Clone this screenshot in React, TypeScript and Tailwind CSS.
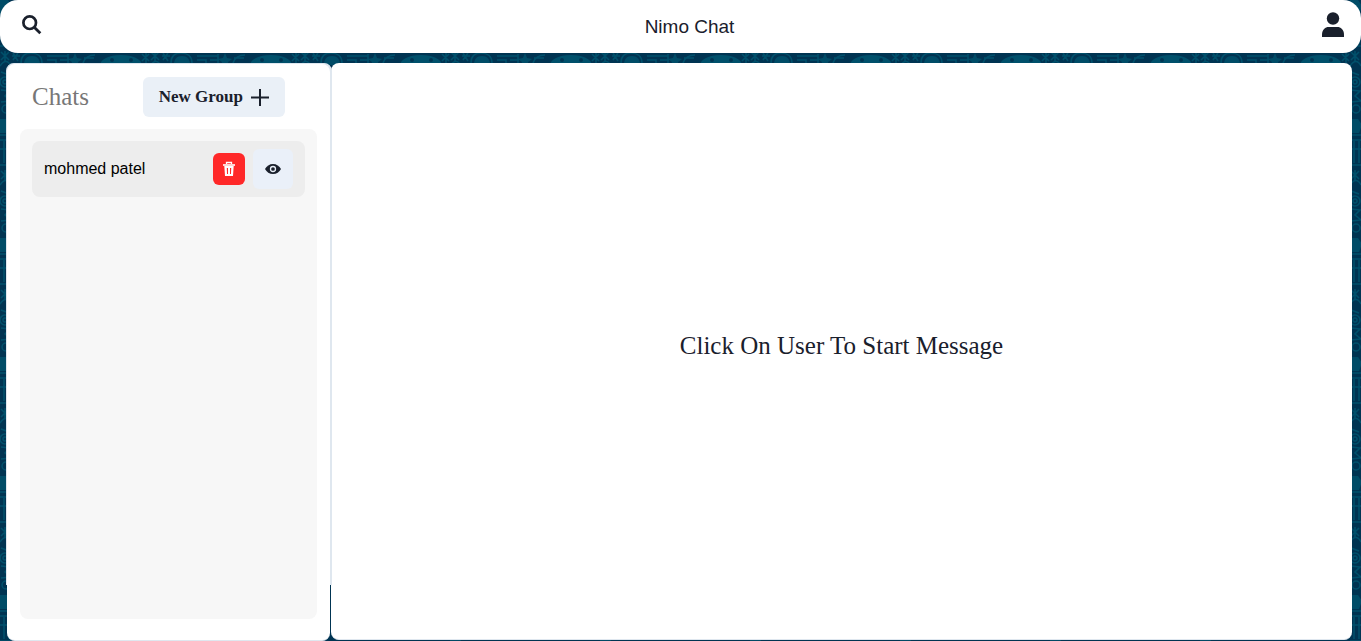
import React from "react";

const chats = [{ id: 1, name: "mohmed patel" }];

function DoodleBackground() {
  return (
    <svg className="fixed inset-0 -z-10 h-full w-full bg-[#003452]" aria-hidden="true">
      <defs>
        <pattern id="doodles" width="150" height="119" patternUnits="userSpaceOnUse">
          <g fill="none" stroke="#00506b" strokeWidth="1.5">
            <circle cx="5" cy="82" r="5" />
            <circle cx="5" cy="82" r="2" />
            <path d="M1 90l9 1-5 5 6 5-10 1M0 16h11M0 21h11M4 22v22M9 22v22M0 46h11M0 66c4-6 8-6 11 0M1 72l8 3M0 30h12" />
            <circle cx="6" cy="109" r="4" />
            <path d="M1 52l8 8M9 52l-8 8M5 51v11M13 53l5 8M18 53l-5 7M142 54l7 7M149 54l-7 7M146 53v10M12 56h8" />
            <path d="M21 63c0-7 4-10 10-10s11 3 11 10M47 56h21M47 60h9v5M60 60h9M68 54v10M83 63c2-6 7-8 12-8M84 58h10" />
          </g>
          <g fill="#00506b">
            <path d="M0 0h8l4 6-3 8H0zM75 53l2 5 5 1-4 3 1 5-4-3-4 3 1-5-4-3 5-1zM24 65c0-6 3-9 8-9s8 3 8 9z" opacity=".85" />
            <path d="M100 66c0-7 9-11 21-11s21 4 21 11z" />
          </g>
          <circle cx="112" cy="60" r="2" fill="#003452" />
          <circle cx="131" cy="60" r="2" fill="#003452" />
        </pattern>
      </defs>
      <rect width="100%" height="100%" fill="url(#doodles)" />
    </svg>
  );
}

function SearchIcon() {
  return (
    <svg width="20" height="20" viewBox="0 0 20 20" fill="none" stroke="currentColor" aria-hidden="true">
      <circle cx="7.700" cy="7.700" r="6.300" strokeWidth="2.700" />
      <path d="M12.500 12.500l5.800 5.800" strokeWidth="2.800" />
    </svg>
  );
}

function PersonIcon() {
  return (
    <svg width="22" height="26" viewBox="0 0 22 26" fill="currentColor" aria-hidden="true">
      <circle cx="11" cy="6.500" r="6.200" />
      <path d="M0 25v-2.500C0 17.500 3.500 15 6.500 15h9c3 0 6.500 2.500 6.500 7.500V25z" />
    </svg>
  );
}

function TrashIcon() {
  return (
    <svg width="14" height="16" viewBox="0 0 14 16" fill="none" stroke="currentColor" aria-hidden="true">
      <path d="M4.500 3V1.500h5V3" strokeWidth="1.300" />
      <path d="M1 4h12" strokeWidth="2" opacity=".8" />
      <path d="M2.300 5h9.400L11 15H3z M4.800 7l.2 6h1V7z M8 7v6h1l.2-6z" fill="currentColor" fillRule="evenodd" stroke="none" />
    </svg>
  );
}

function EyeIcon() {
  return (
    <svg width="16" height="12" viewBox="0 0 16 12" fill="currentColor" aria-hidden="true">
      <path d="M0 6c1.600-3 4.500-5 8-5s6.400 2 8 5c-1.600 3-4.500 5-8 5S1.600 9 0 6z" />
      <circle cx="8" cy="6" r="2.500" fill="none" stroke="#eaf0f9" strokeWidth="1.300" />
    </svg>
  );
}

export default function App() {
  return (
    <div className="flex h-screen flex-col overflow-hidden font-['Liberation_Sans',sans-serif] text-[#1a202c]">
      <DoodleBackground />
      <header className="flex h-[53px] shrink-0 items-center justify-between rounded-[18px] bg-white pr-4 pl-[22px]">
        <button type="button" aria-label="Search users" className="flex w-9 pb-1">
          <SearchIcon />
        </button>
        <h1 className="text-[19px] leading-6">Nimo Chat</h1>
        <button type="button" aria-label="Profile" className="flex w-6 justify-center pb-1">
          <PersonIcon />
        </button>
      </header>

      <main className="mt-[10px] flex min-h-0 flex-1 pr-[9px] pl-[6px]">
        <aside className="relative z-10 -mr-px h-[calc(100%-56px)] w-[326px] shrink-0 rounded-t-lg border border-r-2 border-[#dfe7ef] bg-[#dfe7ef]">
          <div className="flex h-[calc(100vh-64px)] flex-col rounded-lg border-b border-[#dfe7ef] bg-white px-[13px] pt-[13px] pb-[21px]">
            <div className="flex items-center justify-between pr-8 pl-3">
              <h2 className="font-['Liberation_Serif',serif] text-[25px] leading-10 text-[#777777]">Chats</h2>
              <button
                type="button"
                className="flex h-10 items-center gap-2 rounded-md bg-[#eaf0f7] px-4 font-['Liberation_Serif',serif] text-[17px] font-semibold"
              >
                New Group
                <svg width="18" height="18" viewBox="0 0 18 18" fill="none" stroke="currentColor" strokeWidth="2" aria-hidden="true">
                  <path d="M9 1v17M0 9.500h18" />
                </svg>
              </button>
            </div>
            <ul className="mt-3 flex-1 rounded-lg bg-[#f7f7f7] p-3">
              {chats.map((chat) => (
                <li key={chat.id} className="flex h-14 items-center gap-2 rounded-lg bg-[#ededed] px-3">
                  <button type="button" className="flex-1 text-left text-base text-black">
                    {chat.name}
                  </button>
                  <button
                    type="button"
                    aria-label="Delete chat"
                    className="flex size-8 items-center justify-center rounded-md bg-[#ff2828] text-white"
                  >
                    <TrashIcon />
                  </button>
                  <button
                    type="button"
                    aria-label="View profile"
                    className="flex size-10 items-center justify-center rounded-md bg-[#eaf0f9]"
                  >
                    <EyeIcon />
                  </button>
                </li>
              ))}
            </ul>
          </div>
        </aside>

        <section className="mb-px flex flex-1 items-center justify-center rounded-lg border-b border-[#dfe7ef] bg-white">
          <p className="pb-[10px] font-['Liberation_Serif',serif] text-[25px] leading-9">Click On User To Start Message</p>
        </section>
      </main>
    </div>
  );
}
